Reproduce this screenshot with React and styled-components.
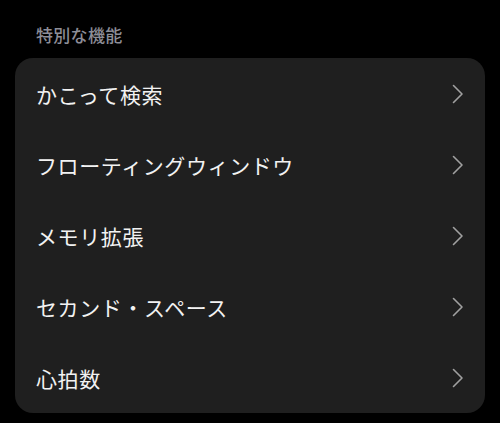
import React from 'react'
import styled, { createGlobalStyle } from 'styled-components'

const GlobalStyle = createGlobalStyle`
  html, body {
    margin: 0;
    padding: 0;
    background: #000;
  }
  body {
    font-family: "Noto Sans CJK JP", "Noto Sans", sans-serif;
  }
`

const Page = styled.div`
  width: 500px;
  height: 423px;
  box-sizing: border-box;
  padding: 23px 15px 0;
  background: #000;
`

const SectionTitle = styled.div`
  margin: 0 0 11px 21px;
  font-size: 17px;
  line-height: 24px;
  color: #8d8d97;
  font-weight: 500;
  letter-spacing: 0.3px;
`

const Card = styled.div`
  width: 470px;
  background: #1f1f1f;
  border-radius: 18px;
  overflow: hidden;
`

const Row = styled.div`
  height: 71px;
  display: flex;
  align-items: center;
  justify-content: space-between;
  padding: 0 21px 0 21px;
`

const Label = styled.span`
  font-size: 21px;
  color: #f2f2f2;
  letter-spacing: 0.6px;
`

const Chevron = () => (
  <svg width="12" height="20" viewBox="0 0 12 20" fill="none">
    <path d="M1.5 1.5 L10 10 L1.5 18.5" stroke="#a0a0a0" strokeWidth="1.6" strokeLinecap="round" strokeLinejoin="round" />
  </svg>
)

const items = ['かこって検索', 'フローティングウィンドウ', 'メモリ拡張', 'セカンド・スペース', '心拍数']

export default function App() {
  return (
    <>
      <GlobalStyle />
      <Page>
        <SectionTitle>特別な機能</SectionTitle>
        <Card>
          {items.map((item) => (
            <Row key={item}>
              <Label>{item}</Label>
              <Chevron />
            </Row>
          ))}
        </Card>
      </Page>
    </>
  )
}
